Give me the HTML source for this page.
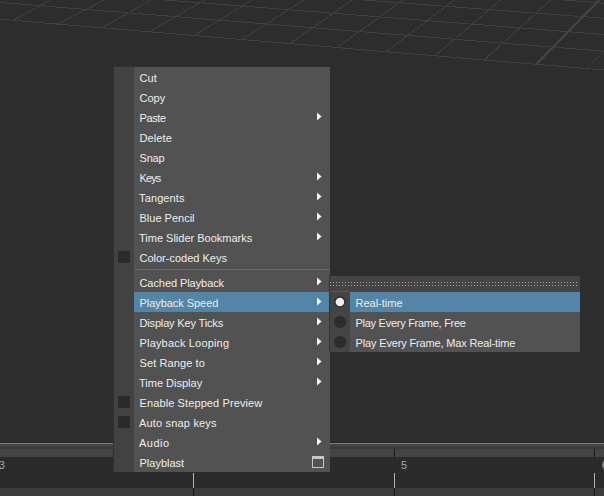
<!DOCTYPE html>
<html><head><meta charset="utf-8"><title>Maya</title>
<style>
html,body{margin:0;padding:0;}
body{width:604px;height:496px;overflow:hidden;background:#2d2d2d;position:relative;font-family:"Liberation Sans",sans-serif;font-size:11px;color:#eeeeee;}
#grid{position:absolute;left:0;top:0;width:604px;height:140px;}
.tl{position:absolute;}
#menu{position:absolute;left:114px;top:67px;width:216px;height:405px;background:#525252;}
#menu .gut{position:absolute;left:-1px;top:-1px;width:20px;height:405px;background:#424242;border-left:1px solid #323232;border-top:1px solid #313131;}
.row{position:absolute;left:20px;width:196px;height:20px;line-height:20px;white-space:nowrap;}
.row span{position:absolute;left:5.5px;top:1px;}
.row.hl{background:#5285a6;}
.cb{position:absolute;left:4px;width:12px;height:12px;background:#2b2b2b;}
.sep{position:absolute;left:21px;width:195px;height:1px;top:202px;background:#6b6b6b;}
#sub{position:absolute;left:329px;top:275px;width:250px;height:76px;background:#525252;border-left:1px solid #353535;border-top:1px solid #303030;}
#sub .tear{position:absolute;left:0;top:0;width:250px;height:16px;background:#444444;}
#sub .gut{position:absolute;left:0;top:16px;width:20px;height:60px;background:#444444;}
#sub .row{left:20px;width:230px;}
</style></head><body>
<svg id="grid" viewBox="0 0 604 140"><g stroke="#3f3f3f" stroke-width="1" fill="none" shape-rendering="crispEdges"><line x1="0" y1="19.2" x2="604" y2="70"/><line x1="0" y1="2.5" x2="604" y2="51.25"/><line x1="164.75" y1="0" x2="604" y2="34.5"/><line x1="363.25" y1="0" x2="604" y2="18.25"/><line x1="564.25" y1="0" x2="604" y2="3.25"/><line x1="14.5" y1="19.5" x2="51" y2="0"/><line x1="57.5" y1="24.25" x2="104" y2="0"/><line x1="101" y1="28.25" x2="151" y2="0"/><line x1="149" y1="32" x2="204.75" y2="0"/><line x1="194.75" y1="35" x2="252" y2="0"/><line x1="242.25" y1="39.25" x2="304" y2="0"/><line x1="289.75" y1="43.75" x2="352" y2="0"/><line x1="337" y1="47.5" x2="403.25" y2="0"/><line x1="385.75" y1="52" x2="454.5" y2="0"/><line x1="434.5" y1="56.25" x2="500.5" y2="0"/><line x1="484.25" y1="60" x2="550.5" y2="0"/><line x1="586.75" y1="68.25" x2="604" y2="51.25"/></g><line x1="535.5" y1="65" x2="599.25" y2="0" stroke="#454545" stroke-width="2.3"/></svg>

<!-- timeline -->
<div class="tl" style="left:0;top:442px;width:604px;height:54px;background:#2b2b2b"></div>
<div class="tl" style="left:0;top:442px;width:604px;height:1px;background:#282828"></div>
<div class="tl" style="left:0;top:443px;width:604px;height:1px;background:#7e7e7e"></div>
<div class="tl" style="left:0;top:444px;width:604px;height:3px;background:#434343"></div>
<div class="tl" style="left:0;top:447px;width:604px;height:2px;background:#393939"></div>
<div class="tl" style="left:0;top:449px;width:604px;height:8px;background:#444444"></div>
<div class="tl" style="left:0;top:488px;width:604px;height:8px;background:#3b3b3b"></div>
<div class="tl" style="left:394px;top:449px;width:1px;height:8px;background:#1b1b1b"></div>
<div class="tl" style="left:394px;top:473px;width:1px;height:15px;background:#b0b0b0"></div>
<div class="tl" style="left:394px;top:488px;width:1px;height:8px;background:#1b1b1b"></div>
<div class="tl" style="left:193px;top:473px;width:1px;height:15px;background:#b0b0b0"></div>
<div class="tl" style="left:193px;top:488px;width:1px;height:8px;background:#1b1b1b"></div>
<div class="tl" style="left:594px;top:449px;width:1px;height:8px;background:#1b1b1b"></div>
<div class="tl" style="left:594px;top:473px;width:1px;height:15px;background:#b0b0b0"></div>
<div class="tl" style="left:594px;top:488px;width:1px;height:8px;background:#1b1b1b"></div>
<div class="tl" style="left:-1.3px;top:458px;color:#a6a6a6;font-size:11px;line-height:14px">3</div>
<div class="tl" style="left:401px;top:458px;color:#a6a6a6;font-size:11px;line-height:14px">5</div>
<div class="tl" style="left:601.8px;top:458px;color:#a6a6a6;font-size:11px;line-height:14px">6</div>

<div id="menu">
<div class="gut"></div>
<div class="row" style="top:0"><span style="letter-spacing:0.09px">Cut</span></div>
<div class="row" style="top:20px"><span>Copy</span></div>
<div class="row" style="top:40px"><span style="letter-spacing:-0.39px">Paste</span></div>
<div class="row" style="top:60px"><span style="letter-spacing:0.1px">Delete</span></div>
<div class="row" style="top:80px"><span style="letter-spacing:-0.18px">Snap</span></div>
<div class="row" style="top:100px"><span style="letter-spacing:-0.89px">Keys</span></div>
<div class="row" style="top:120px"><span style="left:5px;letter-spacing:0.13px">Tangents</span></div>
<div class="row" style="top:140px"><span>Blue Pencil</span></div>
<div class="row" style="top:160px"><span style="left:5px;">Time Slider Bookmarks</span></div>
<div class="row" style="top:180px"><span>Color-coded Keys</span></div>
<div class="sep"></div>
<div class="row" style="top:205px"><span style="letter-spacing:-0.07px">Cached Playback</span></div>
<div class="row hl" style="top:225px"><span style="letter-spacing:-0.05px">Playback Speed</span></div>
<div class="row" style="top:245px"><span style="letter-spacing:-0.16px">Display Key Ticks</span></div>
<div class="row" style="top:265px"><span style="letter-spacing:0.18px">Playback Looping</span></div>
<div class="row" style="top:285px"><span style="letter-spacing:0.1px">Set Range to</span></div>
<div class="row" style="top:305px"><span style="left:5px;">Time Display</span></div>
<div class="row" style="top:325px"><span style="letter-spacing:0.11px">Enable Stepped Preview</span></div>
<div class="row" style="top:345px"><span style="left:5px;letter-spacing:0.18px">Auto snap keys</span></div>
<div class="row" style="top:365px"><span style="left:5px;letter-spacing:0.49px">Audio</span></div>
<div class="row" style="top:385px"><span>Playblast</span></div>
<div class="cb" style="top:184px"></div>
<div class="cb" style="top:329px"></div>
<div class="cb" style="top:349px"></div>
<svg style="position:absolute;left:0;top:0" width="216" height="405"><g fill="#f2f2f2"><path d="M203 45.5L207.6 49.5L203 53.5Z"/><path d="M203 105.5L207.6 109.5L203 113.5Z"/><path d="M203 125.5L207.6 129.5L203 133.5Z"/><path d="M203 145.5L207.6 149.5L203 153.5Z"/><path d="M203 165.5L207.6 169.5L203 173.5Z"/><path d="M203 210.5L207.6 214.5L203 218.5Z"/><path d="M203 230.5L207.6 234.5L203 238.5Z"/><path d="M203 250.5L207.6 254.5L203 258.5Z"/><path d="M203 270.5L207.6 274.5L203 278.5Z"/><path d="M203 290.5L207.6 294.5L203 298.5Z"/><path d="M203 310.5L207.6 314.5L203 318.5Z"/><path d="M203 370.5L207.6 374.5L203 378.5Z"/></g></svg>
<svg style="position:absolute;left:198px;top:389px" width="13" height="13" viewBox="0 0 13 13"><rect x="0.5" y="0.5" width="11" height="11" fill="none" stroke="#c8c8c8" stroke-width="1"/><rect x="0" y="0" width="12" height="3" fill="#c8c8c8"/></svg>
</div>

<div id="sub">
<div class="tear"></div>
<svg style="position:absolute;left:0;top:0" width="250" height="16"><line x1="0" y1="6.5" x2="247" y2="6.5" stroke="#a8a8a8" stroke-width="1" stroke-dasharray="1 2" shape-rendering="crispEdges"/><line x1="0" y1="9.5" x2="247" y2="9.5" stroke="#a8a8a8" stroke-width="1" stroke-dasharray="1 2" shape-rendering="crispEdges"/></svg>
<div class="gut"></div>
<div class="row hl" style="top:16px"><span>Real-time</span></div>
<div class="row" style="top:36px"><span style="letter-spacing:-0.27px">Play Every Frame, Free</span></div>
<div class="row" style="top:56px"><span style="letter-spacing:-0.15px">Play Every Frame, Max Real-time</span></div>
<svg style="position:absolute;left:0;top:16px" width="20" height="60"><circle cx="9.9" cy="9.8" r="5.6" fill="#2b2b2b"/><circle cx="9.9" cy="10" r="4.3" fill="#f0f0f0"/><circle cx="10.1" cy="29.9" r="6" fill="#2c2c2c"/><circle cx="10.1" cy="49.9" r="6" fill="#2c2c2c"/></svg>
<div class="tl" style="left:0;top:15px;width:20px;height:1px;background:#585858"></div>
</div>
</body></html>
